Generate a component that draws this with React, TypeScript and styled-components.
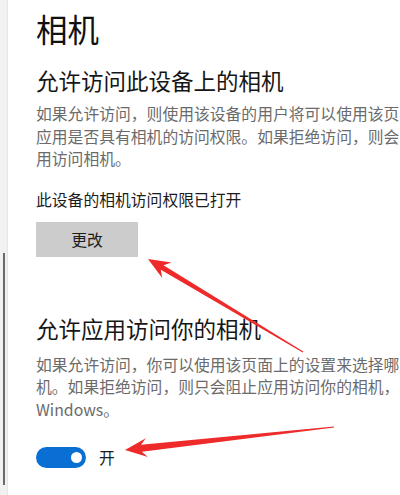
import React from 'react';
import styled, { createGlobalStyle } from 'styled-components';

const GlobalStyle = createGlobalStyle`
  html, body {
    margin: 0;
    padding: 0;
    background: #ffffff;
    overflow: hidden;
  }
  body {
    font-family: "Noto Sans CJK SC", "Noto Sans", "Liberation Sans", sans-serif;
  }
`;

const Page = styled.div`
  position: relative;
  display: flex;
  width: 400px;
  height: 495px;
  overflow: hidden;
`;

const Rail = styled.div`
  flex: 0 0 7px;
  display: flex;
  flex-direction: column;
  align-items: center;
  background: #f1f1f1;
  border-right: 1px solid #e6e6e6;
`;

const Thumb = styled.div`
  margin-top: 253px;
  width: 2px;
  height: 232px;
  margin-left: 1px;
  background: #6a6a6a;
`;

const Content = styled.div`
  flex: 1;
  padding: 9px 0 0 28px;
  display: flex;
  flex-direction: column;
  white-space: nowrap;
`;

const Title = styled.h1`
  margin: 0;
  font-size: 31.5px;
  font-weight: 400;
  line-height: 38px;
  color: #111;
`;

const Heading = styled.h2<{ $top: number }>`
  margin: ${p => p.$top}px 0 0;
  font-size: 22.5px;
  font-weight: 400;
  line-height: 30px;
  color: #161616;
`;

const Desc = styled.p<{ $top: number }>`
  margin: ${p => p.$top}px 0 0;
  font-size: 15.8px;
  line-height: 22.5px;
  color: #6b6b6b;
`;

const Line = styled.span`
  display: block;
`;

const Status = styled.div`
  margin-top: 18px;
  font-size: 15.8px;
  line-height: 22px;
  color: #1c1c1c;
`;

const ChangeButton = styled.button`
  margin-top: 11px;
  width: 102px;
  height: 35px;
  border: none;
  background: #cccccc;
  font-family: inherit;
  font-size: 15.8px;
  color: #1c1c1c;
  padding: 0;
`;

const ToggleRow = styled.div`
  margin-top: 25px;
  display: flex;
  align-items: center;
  gap: 13px;
`;

const Toggle = styled.div`
  width: 50px;
  height: 21px;
  border-radius: 11px;
  background: #0a6fd2;
  display: flex;
  align-items: center;
  justify-content: flex-end;
  padding-right: 4px;
  box-sizing: border-box;
`;

const Knob = styled.div`
  width: 11px;
  height: 11px;
  border-radius: 50%;
  background: #fff;
`;

const ToggleLabel = styled.span`
  font-size: 15.8px;
  color: #1c1c1c;
`;

const Overlay = styled.svg`
  position: absolute;
  left: 0;
  top: 0;
  pointer-events: none;
`;

type Pt = [number, number];

function arrowPoints(tail: Pt, tip: Pt, headLen: number, headHalf: number, neckHalf: number, tailHalf: number) {
  const dx = tip[0] - tail[0];
  const dy = tip[1] - tail[1];
  const len = Math.hypot(dx, dy);
  const ux = dx / len;
  const uy = dy / len;
  const nx = -uy;
  const ny = ux;
  const bx = tip[0] - ux * headLen;
  const by = tip[1] - uy * headLen;
  const nkx = tip[0] - ux * (headLen * 0.75);
  const nky = tip[1] - uy * (headLen * 0.75);
  const pts: Pt[] = [
    tip,
    [bx + nx * headHalf, by + ny * headHalf],
    [nkx + nx * neckHalf, nky + ny * neckHalf],
    [tail[0] + nx * tailHalf, tail[1] + ny * tailHalf],
    [tail[0] - nx * tailHalf, tail[1] - ny * tailHalf],
    [nkx - nx * neckHalf, nky - ny * neckHalf],
    [bx - nx * headHalf, by - ny * headHalf],
  ];
  return pts.map(p => `${p[0].toFixed(1)},${p[1].toFixed(1)}`).join(' ');
}

export default function App() {
  return (
    <Page>
      <GlobalStyle />
      <Rail>
        <Thumb />
      </Rail>
      <Content>
        <Title>相机</Title>
        <Heading $top={18}>允许访问此设备上的相机</Heading>
        <Desc $top={8}>
          <Line>如果允许访问，则使用该设备的用户将可以使用该页</Line>
          <Line>应用是否具有相机的访问权限。如果拒绝访问，则会</Line>
          <Line>用访问相机。</Line>
        </Desc>
        <Status>此设备的相机访问权限已打开</Status>
        <ChangeButton>更改</ChangeButton>
        <Heading $top={56}>允许应用访问你的相机</Heading>
        <Desc $top={11}>
          <Line>如果允许访问，你可以使用该页面上的设置来选择哪</Line>
          <Line>机。如果拒绝访问，则只会阻止应用访问你的相机，</Line>
          <Line>Windows。</Line>
        </Desc>
        <ToggleRow>
          <Toggle>
            <Knob />
          </Toggle>
          <ToggleLabel>开</ToggleLabel>
        </ToggleRow>
      </Content>
      <Overlay width="400" height="495" viewBox="0 0 400 495">
        <polygon points={arrowPoints([303, 352], [148, 259], 22, 9, 2.6, 0.5)} fill="#ee2a2a" />
        <polygon points={arrowPoints([334, 427], [125, 450], 22, 9.5, 3.5, 0.5)} fill="#ee2a2a" />
      </Overlay>
    </Page>
  );
}
